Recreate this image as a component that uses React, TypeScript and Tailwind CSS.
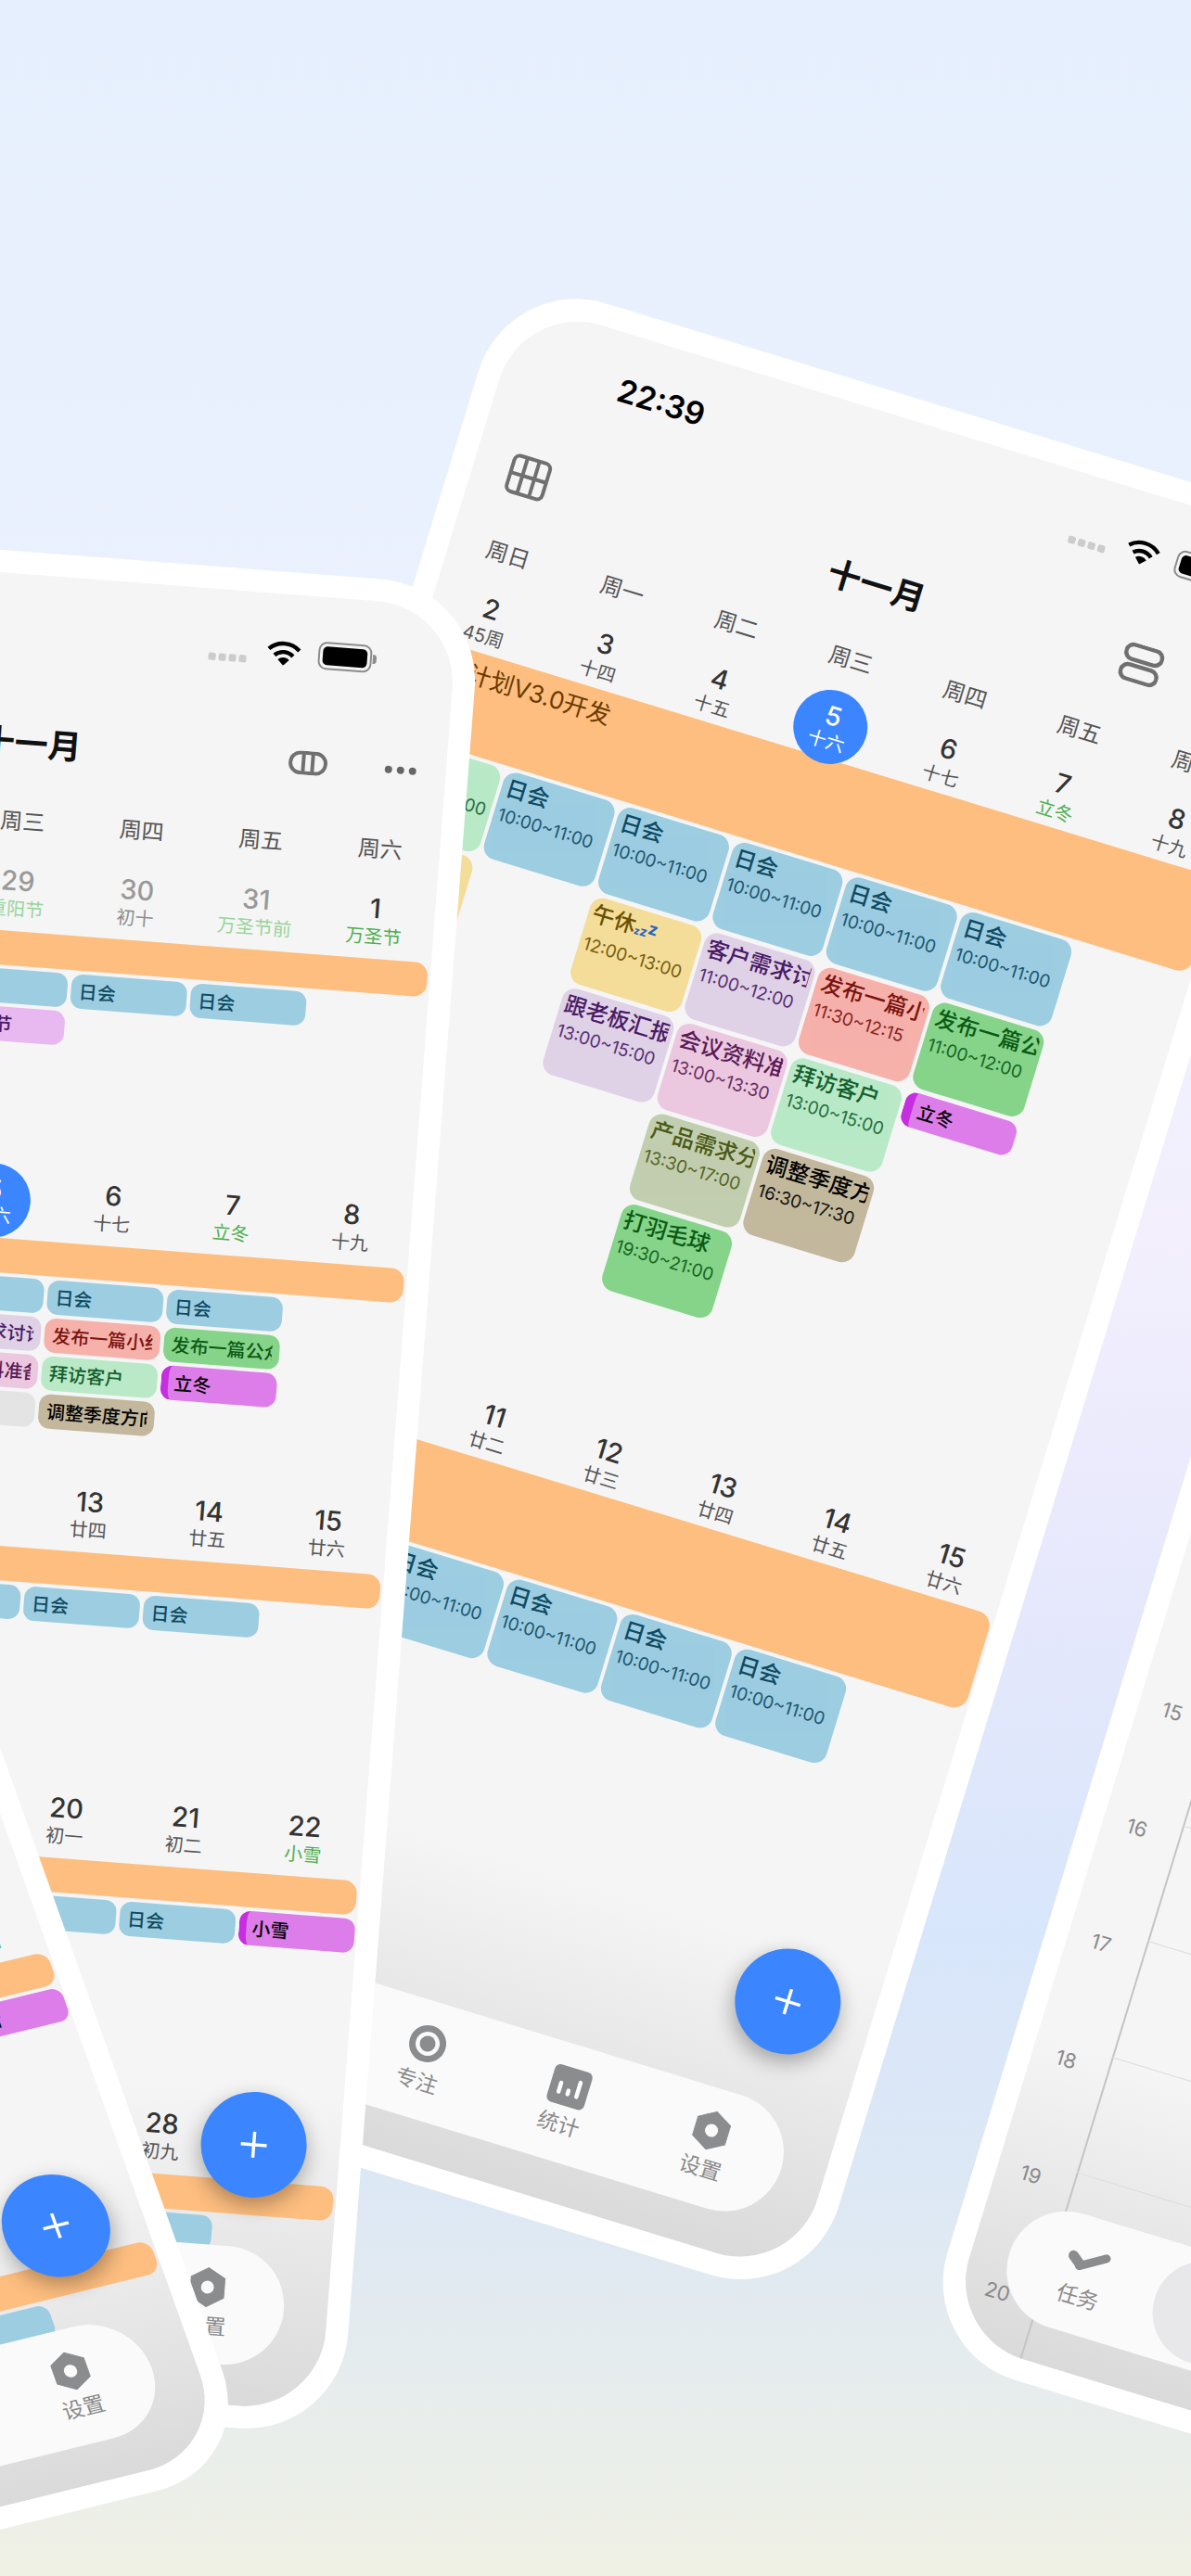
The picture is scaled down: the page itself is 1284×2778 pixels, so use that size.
type Ev = { t: string; s?: string; c: string; mark?: boolean; zzz?: boolean };
type Day = { d: number; l: string; muted?: boolean; tone?: 'term' | 'termMuted'; today?: boolean };

const BLUE = 'bg-[#9dcde1] text-[#0e4a63]';
const MINT = 'bg-[#b9e9c7] text-[#14602e]';
const YELLOW = 'bg-[#f4dc99] text-[#6a5100]';
const LILAC = 'bg-[#dfd1e6] text-[#4a1a66]';
const PINK = 'bg-[#ebc8e0] text-[#5a1a55]';
const SALMON = 'bg-[#f6b1ab] text-[#7a1410]';
const GREEN = 'bg-[#85d48a] text-[#0c5a14]';
const OLIVE = 'bg-[#c2ceb0] text-[#4a5a14]';
const TAN = 'bg-[#c3b89d] text-[#000000]';
const MAGENTA = 'bg-[#dd7dea] text-[#000000]';
const ORCHID = 'bg-[#e8b8f0] text-[#4a1a66]';
const GREY = 'bg-[#e4e4e4] text-[#e4e4e4]';

const daily: Ev = { t: '日会', s: '10:00~11:00', c: BLUE };
const dailyCols: Ev[][] = [[], [daily], [daily], [daily], [daily], [daily], []];

const week1Cols: Ev[][] = [
  [
    { t: '晨会', s: '09:00~10:00', c: MINT },
    { t: '读书', s: '12:00~13:00', c: YELLOW },
  ],
  [daily],
  [
    daily,
    { t: '午休', s: '12:00~13:00', c: YELLOW, zzz: true },
    { t: '跟老板汇报', s: '13:00~15:00', c: LILAC },
  ],
  [
    daily,
    { t: '客户需求讨论', s: '11:00~12:00', c: LILAC },
    { t: '会议资料准备', s: '13:00~13:30', c: PINK },
    { t: '产品需求分析', s: '13:30~17:00', c: OLIVE },
    { t: '打羽毛球', s: '19:30~21:00', c: GREEN },
  ],
  [
    daily,
    { t: '发布一篇小红书', s: '11:30~12:15', c: SALMON },
    { t: '拜访客户', s: '13:00~15:00', c: MINT },
    { t: '调整季度方向', s: '16:30~17:30', c: TAN },
  ],
  [
    daily,
    { t: '发布一篇公众号', s: '11:00~12:00', c: GREEN },
    { t: '立冬', c: MAGENTA, mark: true },
  ],
  [],
];

const week1Compact: Ev[][] = [
  ...week1Cols.slice(0, 3),
  [
    daily,
    { t: '客户需求讨论', c: LILAC },
    { t: '会议资料准备', c: PINK },
    { t: '更多', c: GREY },
  ],
  ...week1Cols.slice(4),
];

const w0: Day[] = [
  { d: 26, l: '44周', muted: true },
  { d: 27, l: '初七', muted: true },
  { d: 28, l: '初八', muted: true },
  { d: 29, l: '重阳节', muted: true, tone: 'termMuted' },
  { d: 30, l: '初十', muted: true },
  { d: 31, l: '万圣节前', muted: true, tone: 'termMuted' },
  { d: 1, l: '万圣节', tone: 'term' },
];
const w1: Day[] = [
  { d: 2, l: '45周' },
  { d: 3, l: '十四' },
  { d: 4, l: '十五' },
  { d: 5, l: '十六', today: true },
  { d: 6, l: '十七' },
  { d: 7, l: '立冬', tone: 'term' },
  { d: 8, l: '十九' },
];
const w2: Day[] = [
  { d: 9, l: '46周' },
  { d: 10, l: '廿一' },
  { d: 11, l: '廿二' },
  { d: 12, l: '廿三' },
  { d: 13, l: '廿四' },
  { d: 14, l: '廿五' },
  { d: 15, l: '廿六' },
];
const w3: Day[] = [
  { d: 16, l: '47周' },
  { d: 17, l: '廿八' },
  { d: 18, l: '廿九' },
  { d: 19, l: '三十' },
  { d: 20, l: '初一' },
  { d: 21, l: '初二' },
  { d: 22, l: '小雪', tone: 'term' },
];
const w4: Day[] = [
  { d: 23, l: '48周' },
  { d: 24, l: '初五' },
  { d: 25, l: '初六' },
  { d: 26, l: '初七' },
  { d: 27, l: '初八' },
  { d: 28, l: '初九' },
  { d: 29, l: '初十' },
];

const weekdays = ['周日', '周一', '周二', '周三', '周四', '周五', '周六'];

function Phone({ className, children }: { className: string; children: React.ReactNode }) {
  return (
    <div className={`absolute h-[2000px] w-[950px] origin-top-left rounded-[110px] bg-white p-[24px] ${className}`}>
      <div className="relative h-full w-full overflow-hidden rounded-[88px] bg-[#f5f5f5]">
        <div className="absolute inset-x-0 bottom-0 h-[340px] bg-gradient-to-b from-[#f5f5f5] to-[#dadada]" />
        <div className="relative h-full">{children}</div>
      </div>
    </div>
  );
}

function StatusBar() {
  return (
    <div className="flex h-[150px] justify-between pl-[126px] pr-[84px]">
      <div className="mt-[43px] text-[34px] font-semibold leading-[36px] text-black">22:39</div>
      <div className="mt-[48px] flex h-[30px] items-center">
        <div className="mt-[20px] flex gap-[3px]">
          <span className="h-[8px] w-[8px] rounded-[2px] bg-[#cccccc]" />
          <span className="h-[8px] w-[8px] rounded-[2px] bg-[#cccccc]" />
          <span className="h-[8px] w-[8px] rounded-[2px] bg-[#cccccc]" />
          <span className="h-[8px] w-[8px] rounded-[2px] bg-[#cccccc]" />
        </div>
        <svg className="ml-[21px]" width="38" height="27" viewBox="0 0 38 27">
          <path d="M2.5 10A24 24 0 0 1 35.5 10" fill="none" stroke="#000" strokeWidth="4.4" />
          <path d="M9 16.5A14.5 14.5 0 0 1 29 16.5" fill="none" stroke="#000" strokeWidth="4.4" />
          <path d="M19 27L12.8 20.8A9 9 0 0 1 25.2 20.8Z" fill="#000" />
        </svg>
        <div className="ml-[18px] flex items-center">
          <div className="h-[30px] w-[58px] rounded-[9px] border-[2.5px] border-[#8c8c8c] p-[3px]">
            <div className="h-full w-full rounded-[5px] bg-black" />
          </div>
          <div className="ml-[1px] h-[10px] w-[4px] rounded-r-[3px] bg-[#8c8c8c]" />
        </div>
      </div>
    </div>
  );
}

function Header({ stacked }: { stacked?: boolean }) {
  return (
    <div className="flex h-[60px] items-center pl-[38px] pr-[32px]">
      <div className="flex-1">
        <svg width="46" height="46" viewBox="0 0 46 46" fill="none" stroke="#707070" strokeWidth="4">
          <rect x="3" y="3" width="40" height="40" rx="6" />
          <path d="M16.3 3V43M29.6 3V43M3 23H43" />
        </svg>
      </div>
      <div className="mt-[4px] text-[36px] font-semibold leading-[44px] text-[#111111]">十一月</div>
      <div className="flex flex-1 items-center justify-end gap-[62px]">
        {stacked ? (
          <svg width="44" height="42" viewBox="0 0 44 42" fill="none" stroke="#707070" strokeWidth="4.5">
            <rect x="2" y="2" width="40" height="16" rx="8" />
            <rect x="2" y="24" width="40" height="16" rx="8" />
          </svg>
        ) : (
          <svg width="42" height="26" viewBox="0 0 42 26" fill="none" stroke="#707070" strokeWidth="4">
            <rect x="2" y="2" width="38" height="22" rx="11" />
            <path d="M16 2V24M26 2V24" />
          </svg>
        )}
        <div className="flex gap-[5px]">
          <span className="h-[8px] w-[8px] rounded-full bg-[#666666]" />
          <span className="h-[8px] w-[8px] rounded-full bg-[#666666]" />
          <span className="h-[8px] w-[8px] rounded-full bg-[#666666]" />
        </div>
      </div>
    </div>
  );
}

function Weekdays() {
  return (
    <div className="grid h-[98px] grid-cols-7 pt-[40px]">
      {weekdays.map((w) => (
        <div key={w} className="text-center text-[24px] leading-[34px] text-[#555555]">
          {w}
        </div>
      ))}
    </div>
  );
}

function DayCell({ day, tall }: { day: Day; tall?: boolean }) {
  const lunar =
    day.tone === 'term' ? 'text-[#4caf50]' : day.tone === 'termMuted' ? 'text-[#99d49b]' : day.muted ? 'text-[#8f8f8f]' : 'text-[#555555]';
  if (day.today) {
    return (
      <div className={`flex justify-center ${tall ? 'h-[74px]' : 'h-[68px]'}`}>
        <div className="relative z-10 -mt-[6px] flex h-[80px] w-[80px] flex-col items-center justify-center rounded-full bg-[#3b86ff] text-white">
          <div className="text-[28px] font-medium leading-[32px]">{day.d}</div>
          <div className="text-[20px] leading-[24px]">{day.l}</div>
        </div>
      </div>
    );
  }
  return (
    <div className={`pt-[2px] text-center ${tall ? 'h-[74px]' : 'h-[68px]'}`}>
      <div className={`text-[29px] font-medium leading-[36px] ${day.muted ? 'text-[#999999]' : 'text-[#333333]'}`}>{day.d}</div>
      <div className={`whitespace-nowrap text-[20px] leading-[24px] ${lunar}`}>{day.l}</div>
    </div>
  );
}

function BigCard({ ev }: { ev: Ev }) {
  if (ev.mark) {
    return (
      <div className={`flex h-[38px] items-center overflow-hidden rounded-[12px] border-l-[10px] border-[#c62ee0] pl-[6px] text-[20px] font-medium ${ev.c}`}>
        {ev.t}
      </div>
    );
  }
  return (
    <div className={`h-[97px] overflow-hidden rounded-[14px] pl-[5px] pr-[5px] pt-[5px] ${ev.c}`}>
      <div className="overflow-hidden whitespace-nowrap text-[24px] font-medium leading-[28px]">
        {ev.t}
        {ev.zzz && (
          <span className="font-bold text-[#2563c9]">
            <span className="text-[11px]">z</span>
            <span className="text-[14px]">z</span>
            <span className="relative -top-[4px] text-[18px]">z</span>
          </span>
        )}
      </div>
      <div className="mt-[4px] whitespace-nowrap text-[19px] leading-[23px] opacity-90">{ev.s}</div>
    </div>
  );
}

function SmallCard({ ev }: { ev: Ev }) {
  return (
    <div
      className={`flex h-[37px] items-center overflow-hidden rounded-[12px] pr-[8px] text-[20px] font-medium ${ev.c} ${
        ev.mark ? 'border-l-[8px] border-[#c62ee0] pl-[6px]' : 'pl-[8px]'
      }`}
    >
      <span className="block overflow-hidden whitespace-nowrap">{ev.t}</span>
    </div>
  );
}

function BigWeek({ days, cols, label, className }: { days: Day[]; cols: Ev[][]; label?: string; className: string }) {
  return (
    <section className={className}>
      <div className="grid grid-cols-7">
        {days.map((d) => (
          <DayCell key={d.d} day={d} />
        ))}
      </div>
      <div className="mr-[3px] h-[108px] rounded-r-[16px] bg-[#fdbe7f] pl-[8px] pt-[9px] text-[26px] leading-[32px] text-[#6b3a00]">
        {label}
      </div>
      <div className="mt-[4px] grid grid-cols-7">
        {cols.map((col, i) => (
          <div key={i} className="flex flex-col gap-[5px] px-[2px]">
            {col.map((ev, j) => (
              <BigCard key={j} ev={ev} />
            ))}
          </div>
        ))}
      </div>
    </section>
  );
}

function SmallWeek({ days, cols }: { days: Day[]; cols: Ev[][] }) {
  return (
    <section className="h-[331px]">
      <div className="grid grid-cols-7">
        {days.map((d) => (
          <DayCell key={`${d.d}-${d.l}`} day={d} tall />
        ))}
      </div>
      <div className="mr-[3px] h-[37px] rounded-r-[14px] bg-[#fdbe7f]" />
      <div className="mt-[4px] grid grid-cols-7">
        {cols.map((col, i) => (
          <div key={i} className="flex flex-col gap-[4px] px-[2px]">
            {col.map((ev, j) => (
              <SmallCard key={j} ev={ev} />
            ))}
          </div>
        ))}
      </div>
    </section>
  );
}

function Fab() {
  return (
    <div className="absolute bottom-[225px] right-[36px] z-20 flex h-[114px] w-[114px] items-center justify-center rounded-full bg-[#3b86ff] shadow-[0_8px_22px_rgba(0,0,0,0.32)]">
      <svg width="30" height="30" viewBox="0 0 30 30" stroke="#fff" strokeWidth="3.5">
        <path d="M15 1V29M1 15H29" />
      </svg>
    </div>
  );
}

function TabIcon({ name }: { name: string }) {
  if (name === '任务') {
    return (
      <svg width="48" height="44" viewBox="0 0 48 44">
        <path d="M7 22L16 29" fill="none" stroke="#8a8c8e" strokeWidth="11" strokeLinecap="round" />
        <path d="M16 31L42 15" fill="none" stroke="#8a8c8e" strokeWidth="9" strokeLinecap="round" />
      </svg>
    );
  }
  if (name === '日历') {
    return (
      <svg width="44" height="44" viewBox="0 0 44 44">
        <rect x="3" y="5" width="38" height="36" rx="8" fill="#3b86ff" />
        <rect x="9" y="16" width="26" height="4" fill="#fff" />
      </svg>
    );
  }
  if (name === '专注') {
    return (
      <svg width="44" height="44" viewBox="0 0 44 44">
        <circle cx="22" cy="22" r="16.5" fill="none" stroke="#8a8c8e" strokeWidth="7" />
        <circle cx="22" cy="22" r="8.5" fill="#8a8c8e" />
      </svg>
    );
  }
  if (name === '统计') {
    return (
      <svg width="44" height="44" viewBox="0 0 44 44">
        <rect x="1" y="1" width="42" height="42" rx="6" fill="#8a8c8e" />
        <path d="M12 20V30M22 26V30M32 14V30" stroke="#fff" strokeWidth="4.5" strokeLinecap="round" />
      </svg>
    );
  }
  return (
    <svg width="44" height="44" viewBox="0 0 44 44">
      <path
        fillRule="evenodd"
        d="M22 1L40.2 11.5V32.5L22 43L3.8 32.5V11.5ZM22 14.5A7.5 7.5 0 1 0 22 29.5A7.5 7.5 0 1 0 22 14.5Z"
        fill="#8a8c8e"
        stroke="#8a8c8e"
        strokeWidth="1"
        strokeLinejoin="round"
      />
    </svg>
  );
}

function TabBar({ selected }: { selected?: string }) {
  return (
    <div
      className={`absolute z-20 grid h-[128px] w-[808px] grid-cols-5 items-center rounded-full bg-[#fafafa] px-[4px] ${
        selected ? 'bottom-[41px] left-[40px]' : 'bottom-[43px] left-[47px]'
      }`}
    >
      {['任务', '日历', '专注', '统计', '设置'].map((name) => (
        <div
          key={name}
          className={`flex h-[112px] flex-col items-center justify-center gap-[4px] rounded-full ${name === selected ? 'bg-[#e8e8ea]' : ''}`}
        >
          <TabIcon name={name} />
          <div className="text-[23px] leading-[32px] text-[#8a8a8a]">{name}</div>
        </div>
      ))}
    </div>
  );
}

function MonthWeeks() {
  return (
    <>
      <StatusBar />
      <Header />
      <Weekdays />
      <div className="mt-[3px]">
        <SmallWeek days={w0} cols={[[], [daily], [daily], [daily, { t: '重阳节', c: ORCHID }], [daily], [daily], []]} />
        <SmallWeek days={w1} cols={week1Compact} />
        <SmallWeek days={w2} cols={dailyCols} />
        <SmallWeek days={w3} cols={[[], [daily], [daily], [daily], [daily], [daily], [{ t: '小雪', c: MAGENTA, mark: true }]]} />
        <SmallWeek days={w4} cols={dailyCols} />
      </div>
      <Fab />
      <TabBar />
    </>
  );
}

export default function App() {
  return (
    <div className="relative h-[2778px] w-[1284px] overflow-hidden bg-[linear-gradient(180deg,#e6effd_0%,#ecf2fe_30%,#f3effd_48%,#e6e8fc_62%,#d8e6fb_75%,#dde8f5_85%,#f0f1e5_100%)] [font-family:Inter,'Noto_Sans_CJK_SC',sans-serif]">
      {/* day view, mostly off the right edge */}
      <Phone className="left-[1574px] top-[622px] rotate-[17deg]">
        <div className="pt-[1220px]">
          {[15, 16, 17, 18, 19, 20].map((h) => (
            <div key={h} className="flex h-[130.6px]">
              <div className="w-[84px] pl-[26px] pt-[4px] text-[22px] leading-[26px] text-[#8a8a8a]">{h}</div>
              <div className="flex-1 border-l-2 border-t border-l-[#c4c4c4] border-t-[#dcdcdc]" />
            </div>
          ))}
        </div>
        <TabBar selected="日历" />
      </Phone>

      {/* expanded month, middle */}
      <Phone className="left-[548px] top-[295px] rotate-[17deg]">
        <StatusBar />
        <Header stacked />
        <Weekdays />
        <BigWeek days={w1} cols={week1Cols} label="版本计划V3.0开发" className="h-[831px]" />
        <BigWeek days={w2} cols={dailyCols} className="h-[400px]" />
        <Fab />
        <TabBar />
      </Phone>

      {/* compact month, left */}
      <Phone className="-left-[427px] top-[560px] rotate-[4.4deg]">
        <MonthWeeks />
      </Phone>

      {/* compact month, bottom left */}
      <Phone className="-left-[1316px] top-[1007px] [transform:matrix(0.971,-0.239,0.335,0.94,0,0)]">
        <MonthWeeks />
      </Phone>
    </div>
  );
}
